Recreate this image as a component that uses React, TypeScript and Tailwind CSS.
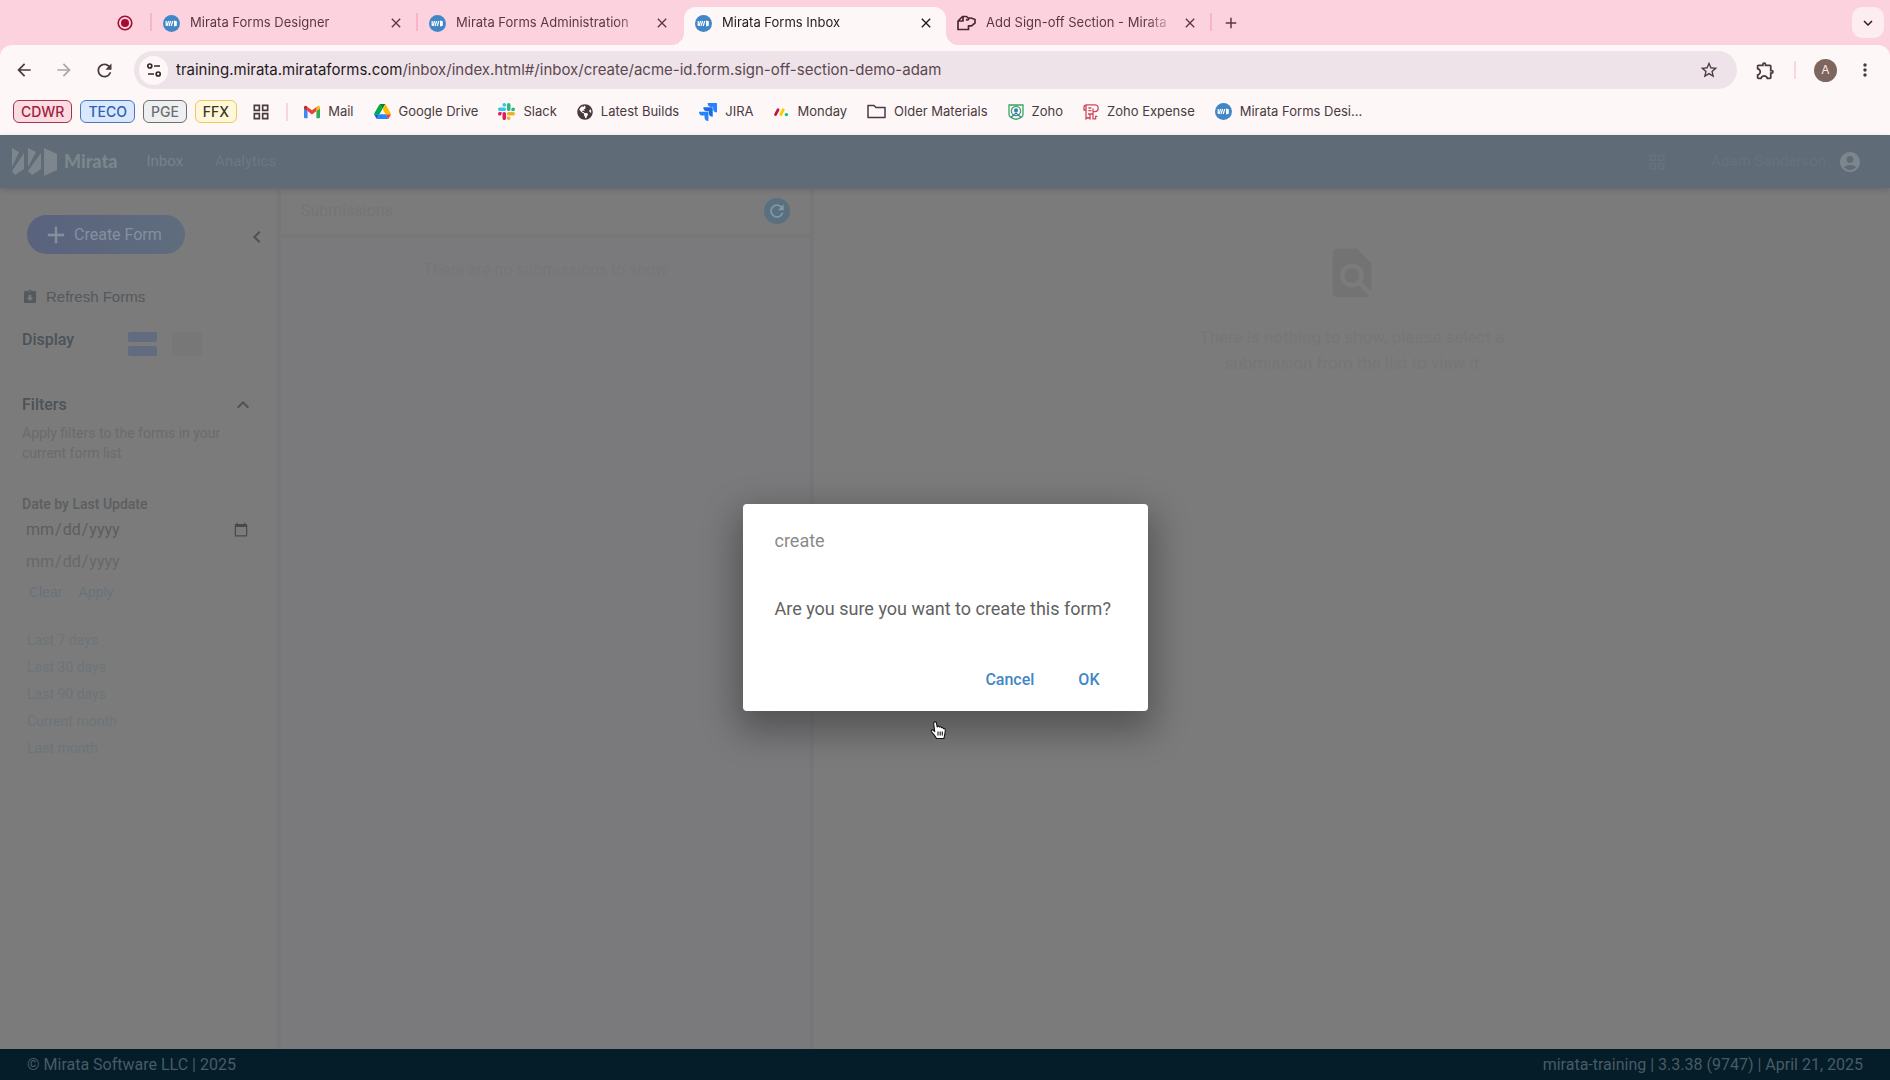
import type { ReactNode } from 'react';
import { FaGlobeAmericas } from 'react-icons/fa';
import {
  MdAccountCircle,
  MdAdd,
  MdArrowBack,
  MdArrowForward,
  MdAssignmentReturned,
  MdChevronLeft,
  MdClose,
  MdExpandLess,
  MdExpandMore,
  MdFindInPage,
  MdMoreVert,
  MdOutlineExtension,
  MdOutlineGridView,
  MdRefresh,
  MdStarOutline,
} from 'react-icons/md';

/* ---------- Icons ---------- */

function MirataIcon() {
  return (
    <svg viewBox="0 0 17 17" className="size-[17px] shrink-0">
      <circle cx="8.5" cy="8.5" r="8.5" fill="#4187c7" />
      <path d="M3.2 6 3.2 10.8M5.6 6 4 11M7.6 6 6 11M9.800 6 8.200 11" fill="none" stroke="#fff" strokeWidth="1.2" />
      <path d="M11 5.400 13.800 6.300V10.700L11 11.600Z" fill="#fff" />
    </svg>
  );
}

function RecordIcon() {
  return (
    <svg viewBox="0 0 16 16" className="size-4">
      <circle cx="8" cy="8" r="6.8" fill="none" stroke="#a30d31" strokeWidth="1.6" />
      <circle cx="8" cy="8" r="4" fill="#a30d31" />
    </svg>
  );
}

function ScribeIcon() {
  return (
    <svg viewBox="0 0 19 16" className="h-4 w-[19px] shrink-0" fill="none" stroke="#4a2832" strokeWidth="1.7" strokeLinejoin="round">
      <path d="M1 14.500V6L5.500 1.500H9.500L11 3H14L18 4.500V8L14.500 10.800H11.500V14.500ZM1.500 6H6V1.800M9 4.500C10.500 5.500 11.500 5 12 3.500" />
    </svg>
  );
}

function SiteSettingsIcon() {
  return (
    <svg viewBox="0 0 16 16" className="size-4" fill="none" stroke="#33262b" strokeWidth="1.7">
      <circle cx="3.8" cy="4" r="2" />
      <path d="M8 4h6M2 12h6" />
      <circle cx="12.2" cy="12" r="2" />
    </svg>
  );
}

function GmailIcon() {
  return (
    <svg viewBox="0 0 18 14" className="h-3.5 w-4">
      <path d="M0 2.5V13a1 1 0 0 0 1 1h3V6Z" fill="#4285f4" />
      <path d="M18 2.5V13a1 1 0 0 1-1 1h-3V6Z" fill="#34a853" />
      <path d="M14 1.3V6l4-3V2c0-1.8-1.8-2.4-3-1.5Z" fill="#fbbc04" />
      <path d="M4 6V1.3l5 3.8 5-3.8V6L9 9.8Z" fill="#ea4335" />
      <path d="M0 2v1l4 3V1.3L3 .5C1.8-.4 0 .2 0 2Z" fill="#c5221f" />
    </svg>
  );
}

function DriveIcon() {
  return (
    <svg viewBox="0 0 87 78" className="h-[15px] w-[17px]">
      <path d="m6.6 66.85 3.85 6.65c.8 1.4 1.95 2.5 3.3 3.3L27.5 53H0c0 1.55.4 3.1 1.2 4.5z" fill="#0066da" />
      <path d="M43.65 25 29.9 1.2c-1.35.8-2.5 1.9-3.3 3.3L1.2 48.5A9.06 9.06 0 0 0 0 53h27.5z" fill="#00ac47" />
      <path d="M73.55 76.8c1.35-.8 2.5-1.9 3.3-3.3l1.6-2.75L86.1 57.5c.8-1.4 1.2-2.95 1.2-4.5H59.8l5.85 11.5z" fill="#ea4335" />
      <path d="M43.65 25 57.4 1.2C56.05.4 54.5 0 52.9 0H34.4c-1.6 0-3.15.45-4.5 1.2z" fill="#00832d" />
      <path d="M59.8 53H27.5L13.75 76.8c1.35.8 2.9 1.2 4.5 1.2h50.8c1.6 0 3.15-.45 4.5-1.2z" fill="#2684fc" />
      <path d="m73.4 26.5-12.7-22c-.8-1.4-1.95-2.5-3.3-3.3L43.65 25 59.8 53h27.45c0-1.55-.4-3.1-1.2-4.5z" fill="#ffba00" />
    </svg>
  );
}

function SlackIcon() {
  return (
    <svg viewBox="0 0 122.8 122.8" className="size-[17px]">
      <path d="M25.8 77.6c0 7.1-5.8 12.9-12.9 12.9S0 84.7 0 77.6s5.8-12.9 12.9-12.9h12.9v12.9zm6.5 0c0-7.1 5.8-12.9 12.9-12.9s12.9 5.8 12.9 12.9v32.3c0 7.1-5.8 12.9-12.9 12.9s-12.9-5.8-12.9-12.9V77.6z" fill="#e01e5a" />
      <path d="M45.2 25.8c-7.1 0-12.9-5.8-12.9-12.9S38.1 0 45.2 0s12.9 5.8 12.9 12.9v12.9H45.2zm0 6.5c7.1 0 12.9 5.8 12.9 12.9s-5.8 12.9-12.9 12.9H12.9C5.8 58.1 0 52.3 0 45.2s5.8-12.9 12.9-12.9h32.3z" fill="#36c5f0" />
      <path d="M97 45.2c0-7.1 5.8-12.9 12.9-12.9s12.9 5.8 12.9 12.9-5.8 12.9-12.9 12.9H97V45.2zm-6.5 0c0 7.1-5.8 12.9-12.9 12.9s-12.9-5.8-12.9-12.9V12.9C64.7 5.8 70.5 0 77.6 0s12.9 5.8 12.9 12.9v32.3z" fill="#2eb67d" />
      <path d="M77.6 97c7.1 0 12.9 5.8 12.9 12.9s-5.8 12.9-12.9 12.9-12.9-5.8-12.9-12.9V97h12.9zm0-6.5c-7.1 0-12.9-5.8-12.9-12.9s5.8-12.9 12.9-12.9h32.3c7.1 0 12.9 5.8 12.9 12.9s-5.8 12.9-12.9 12.9H77.6z" fill="#ecb22e" />
    </svg>
  );
}

function JiraIcon() {
  return (
    <svg viewBox="0 0 24 24" className="size-[18px]">
      <path d="M11.57 11.51H0a5.22 5.22 0 0 0 5.23 5.22h2.13v2.05A5.22 5.22 0 0 0 12.58 24V12.52a1 1 0 0 0-1.01-1.01z" fill="#2684ff" />
      <path d="M17.29 5.76H5.74a5.22 5.22 0 0 0 5.21 5.21h2.13v2.06a5.22 5.22 0 0 0 5.22 5.21V6.76a1 1 0 0 0-1.01-1z" fill="#1a6ce8" />
      <path d="M23.01 0H11.46a5.22 5.22 0 0 0 5.21 5.21h2.13v2.06A5.22 5.22 0 0 0 24 12.48V1.01A1 1 0 0 0 23.01 0z" fill="#2684ff" />
    </svg>
  );
}

function MondayIcon() {
  return (
    <svg viewBox="0 0 16 12" className="h-3 w-4" strokeLinecap="round" strokeWidth="2.8">
      <path d="M2.500 8.6 5 3.800" stroke="#c4124a" />
      <path d="M7.8 8.6 10.2 3.800" stroke="#ffcb00" />
      <circle cx="13.4" cy="8.6" r="1.7" fill="#00ca72" />
    </svg>
  );
}

function FolderIcon() {
  return (
    <svg viewBox="0 0 19 15" className="h-[15px] w-[19px]" fill="none" stroke="currentColor" strokeWidth="1.5" strokeLinejoin="round">
      <path d="M1 13.500V1.500h6l2 2h9v10Z" />
    </svg>
  );
}

function ZohoIcon() {
  return (
    <svg viewBox="0 0 16 16" className="size-4" fill="none" strokeWidth="1.3">
      <path d="M1 1h14v9.500c0 2-3 3.800-7 4.800C4 14.300 1 12.500 1 10.500Z" stroke="#3aa564" />
      <circle cx="8" cy="7" r="4.6" stroke="#3aa564" />
      <circle cx="8" cy="6.4" r="1.4" fill="#3d7fb8" stroke="#3d7fb8" />
      <path d="M3 13.200 8 9l5 4.200" stroke="#3d7fb8" />
    </svg>
  );
}

function ZohoExpenseIcon() {
  return (
    <svg viewBox="0 0 16 16" className="size-4" fill="none" stroke="#d2475c" strokeWidth="1.3">
      <path d="M3 10V2.4C3 1.4 3.8.8 4.6.8h7.2a3.4 3.4 0 0 1 0 6.8H10V4.4M3 6H1V3.2C1 1.6 2 .8 4 .8M5.4 4h3M5.4 6.6h3M3 10v4.8l2-1.2 2 1.2V10M10 7.6v7.2h2.6v-2.4h1.8M5 10h5" />
    </svg>
  );
}

function MirataLogo() {
  return (
    <svg viewBox="0 0 46 29" className="h-[29px] w-[46px]" fill="#7d868d">
      <path d="M0 1 7 5 0 20ZM12 6v16L3 28 0 24ZM16 1 24 5 16 20ZM29 6v16l-9 6-4-4ZM32 1l13 6v16l-13 6Z" />
    </svg>
  );
}

/* ---------- Browser chrome ---------- */

interface TabProps {
  icon: ReactNode;
  title: string;
  active?: boolean;
  divider?: boolean;
}

function Tab({ icon, title, active, divider }: TabProps) {
  return (
    <div className={active ? 'relative flex h-[38px] w-[262px] items-center rounded-t-xl bg-[#fdf7f7] pb-1.5 pl-[11px] pr-3 text-[#1f1a1c]' : 'relative flex h-[38px] w-[266px] items-center pb-1.5 pl-[11px] pr-3.5 text-[#5a3843]'}>
      {active && (
        <>
          <span className="absolute -left-3 bottom-0 size-3 bg-[radial-gradient(circle_at_0_0,transparent_12px,#fdf7f7_12px)]" />
          <span className="absolute -right-3 bottom-0 size-3 bg-[radial-gradient(circle_at_100%_0,transparent_12px,#fdf7f7_12px)]" />
        </>
      )}
      {icon}
      <span className="ml-2.5 flex-1 overflow-hidden whitespace-nowrap text-[13px] [mask-image:linear-gradient(to_right,#000_160px,transparent_190px)]">{title}</span>
      <button type="button" aria-label={`Close ${title}`} className="ml-1 shrink-0">
        <MdClose className="size-4" />
      </button>
      {divider && <span className="absolute right-0 top-1.5 h-[18px] w-0.5 bg-[#f8b4c8]" />}
    </div>
  );
}

function TabStrip() {
  return (
    <div className="flex h-[45px] items-start bg-[#fdd2df] pt-[7px]">
      <div className="relative flex h-8 w-[152px] items-center justify-end pr-[19px]">
        <RecordIcon />
        <span className="absolute right-0 top-1.5 h-[18px] w-0.5 bg-[#f8b4c8]" />
      </div>
      <Tab icon={<MirataIcon />} title="Mirata Forms Designer" divider />
      <Tab icon={<MirataIcon />} title="Mirata Forms Administration" />
      <Tab icon={<MirataIcon />} title="Mirata Forms Inbox" active />
      <Tab icon={<ScribeIcon />} title="Add Sign-off Section - Mirata" divider />
      <button type="button" aria-label="New tab" className="ml-2.5 flex h-8 items-center text-[#5a3843]">
        <MdAdd className="size-[18px]" />
      </button>
      <button type="button" aria-label="Search tabs" className="ml-auto mr-1.5 flex h-[31px] w-8 items-center justify-center rounded-[10px] bg-[#fdecf0] text-[#2b1d22]">
        <MdExpandMore className="size-[18px]" />
      </button>
    </div>
  );
}

function Toolbar() {
  return (
    <div className="bg-[#fdd2df]">
      <div className="flex h-[49px] items-center rounded-t-xl bg-[#fdf7f7] pl-3.5 pr-[15px] pt-px text-[#4a3a40]">
        <button type="button" aria-label="Back"><MdArrowBack className="size-5" /></button>
        <button type="button" aria-label="Forward" className="ml-5 text-[#b3a4a9]"><MdArrowForward className="size-5" /></button>
        <button type="button" aria-label="Reload" className="ml-5"><MdRefresh className="size-[21px]" /></button>
        <div className="ml-[19px] flex h-[38px] flex-1 items-center rounded-full bg-[#eee3e9] pl-[5px] pr-[18px]">
          <button type="button" aria-label="Site information" className="flex size-[29px] items-center justify-center rounded-full bg-[#fdf7f7]">
            <SiteSettingsIcon />
          </button>
          <span className="ml-2 flex-1 whitespace-nowrap text-[15px] text-[#5b484f]">
            <span className="text-[#1f1a1c]">training.mirata.mirataforms.com</span>
            /inbox/index.html#/inbox/create/acme-id.form.sign-off-section-demo-adam
          </span>
          <button type="button" aria-label="Bookmark this page"><MdStarOutline className="size-5" /></button>
        </div>
        <button type="button" aria-label="Extensions" className="ml-[18px]"><MdOutlineExtension className="size-[21px]" /></button>
        <span className="ml-[18px] h-[18px] w-0.5 bg-[#fbd5df]" />
        <button type="button" className="ml-[18px] size-[23px] rounded-full bg-[#7d665f] text-[12px] text-[#fbe9e4]">A</button>
        <button type="button" aria-label="Menu" className="ml-[18px]"><MdMoreVert className="size-5" /></button>
      </div>
    </div>
  );
}

const bookmarks: { name: string; icon: ReactNode }[] = [
  { name: 'Mail', icon: <GmailIcon /> },
  { name: 'Google Drive', icon: <DriveIcon /> },
  { name: 'Slack', icon: <SlackIcon /> },
  { name: 'Latest Builds', icon: <FaGlobeAmericas className="size-4" /> },
  { name: 'JIRA', icon: <JiraIcon /> },
  { name: 'Monday', icon: <MondayIcon /> },
  { name: 'Older Materials', icon: <FolderIcon /> },
  { name: 'Zoho', icon: <ZohoIcon /> },
  { name: 'Zoho Expense', icon: <ZohoExpenseIcon /> },
  { name: 'Mirata Forms Desi...', icon: <MirataIcon /> },
];

const groups = [
  { name: 'CDWR', style: 'border-[#a8324c] bg-[#fbdce2] text-[#a3203f]' },
  { name: 'TECO', style: 'border-[#4a78b8] bg-[#d9e8fd] text-[#2f5fb3]' },
  { name: 'PGE', style: 'border-[#6b6f72] bg-[#eeeff0] text-[#6b6f72]' },
  { name: 'FFX', style: 'border-[#f0c95c] bg-[#fff8d8] text-[#3d3528]' },
];

function BookmarksBar() {
  return (
    <nav className="flex h-[41px] items-center bg-[#fdf7f7] pb-1.5 pl-[13px] text-[13px] text-[#4a3a40]">
      <div className="flex gap-2">
        {groups.map((group) => (
          <button key={group.name} type="button" className={`h-[23px] rounded-md border px-[7px] text-[14px] leading-5 font-medium ${group.style}`}>
            {group.name}
          </button>
        ))}
      </div>
      <MdOutlineGridView className="ml-3.5 size-5" />
      <span className="ml-[15px] h-[18px] w-0.5 bg-[#fbd5df]" />
      <div className="ml-4 flex gap-5">
        {bookmarks.map((bookmark) => (
          <a key={bookmark.name} href="#" className="flex items-center gap-2 whitespace-nowrap">
            {bookmark.icon}
            {bookmark.name}
          </a>
        ))}
      </div>
    </nav>
  );
}

/* ---------- App ---------- */

function AppHeader() {
  return (
    <header className="relative flex h-[53px] shrink-0 items-center bg-[#5f6b77] pl-3 pr-7 text-[#77828b] shadow-[0_2px_6px_rgba(0,0,0,0.15)]">
      <MirataLogo />
      <span className="ml-1.5 font-[Lato] text-[18px] font-black text-[#7d868d]">Mirata</span>
      <nav className="ml-[29px] flex gap-8 text-[15px]">
        <a href="#">Inbox</a>
        <a href="#" className="text-[#6d7882]">Analytics</a>
      </nav>
      <div className="ml-auto flex items-center text-[15px] text-[#67727b]">
        <MdOutlineGridView className="size-5" />
        <span className="ml-11 mr-3">Adam Sanderson</span>
        <MdAccountCircle className="size-6 text-[#7c868c]" />
      </div>
    </header>
  );
}

const ranges = ['Last 7 days', 'Last 30 days', 'Last 90 days', 'Current month', 'Last month'];

function Sidebar() {
  return (
    <aside className="w-[277px] shrink-0 bg-[#7b7b7b] pl-[22px] pr-5 pt-[27px] text-[#4c5258]">
      <div className="flex items-center justify-between">
        <button type="button" className="ml-[5px] flex h-[39px] w-[158px] items-center rounded-full bg-linear-to-r from-[#5a627e] to-[#5f6d7e] pl-[15px] text-[16px] text-[#85909f]">
          <MdAdd className="size-7" />
          <span className="ml-1">Create Form</span>
        </button>
        <button type="button" aria-label="Collapse sidebar" className="-mr-3 mt-1"><MdChevronLeft className="size-6" /></button>
      </div>
      <button type="button" className="mt-[33px] flex items-center gap-2 font-['Liberation_Sans'] text-[15px] leading-5 text-[#54595d]">
        <MdAssignmentReturned className="size-4" />
        Refresh Forms
      </button>
      <div className="mt-[19px] flex h-7 items-center">
        <span className="w-[106px] text-[16px] font-medium">Display</span>
        <button type="button" aria-label="List view" className="mt-2 flex w-[29px] flex-col gap-1">
          <span className="h-2.5 w-full rounded-xs bg-[#626c80]" />
          <span className="h-2.5 w-full rounded-xs bg-[#626c80]" />
        </button>
        <button type="button" aria-label="Grid view" className="ml-[15px] mt-2 h-6 w-[30px] rounded-xs bg-[#777777]" />
      </div>
      <div className="mt-[39px] flex items-center justify-between">
        <h2 className="text-[16px] font-medium">Filters</h2>
        <MdExpandLess className="mr-0.5 size-6" />
      </div>
      <p className="mt-1.5 text-[14px] leading-5 text-[#686c6e]">Apply filters to the forms in your current form list</p>
      <label htmlFor="from" className="mt-[31px] block text-[14px] leading-5 font-medium text-[#5c5f61]">Date by Last Update</label>
      <input id="from" type="date" className="ml-[3px] block h-8 w-[226px] bg-transparent text-[16px] text-[#5c5e60] [&::-webkit-calendar-picker-indicator]:opacity-40" />
      <input aria-label="To" type="date" className="ml-[3px] block h-8 w-[226px] bg-transparent text-[16px] text-[#66686a] [&::-webkit-calendar-picker-indicator]:opacity-0" />
      <div className="ml-[7px] mt-1 flex gap-4 font-['Liberation_Sans'] text-[14px] leading-5 text-[#69727a]">
        <button type="button">Clear</button>
        <button type="button">Apply</button>
      </div>
      <ul className="ml-[5px] mt-[25px] text-[14px] leading-[27px] text-[#6d7479]">
        {ranges.map((range) => (
          <li key={range}><a href="#">{range}</a></li>
        ))}
      </ul>
    </aside>
  );
}

function FormList() {
  return (
    <section className="flex w-[537px] shrink-0 flex-col border-x-4 border-[#777779] bg-[#7a7a7c]">
      <div className="flex h-[50px] items-center justify-between border-b-4 border-[#777778] bg-[#7b7b7b] pl-5 pr-5 text-[#757575]">
        <span className="text-[16px]">Submissions</span>
        <button type="button" aria-label="Refresh list" className="flex size-[26px] items-center justify-center rounded-full bg-[#58707f] text-[#8498a5]">
          <MdRefresh className="size-5" />
        </button>
      </div>
      <p className="mt-5 text-center text-[16px] text-[#767678]">There are no submissions to show</p>
    </section>
  );
}

function Preview() {
  return (
    <section className="flex flex-1 flex-col items-center bg-[#7b7b7b] pt-14">
      <MdFindInPage className="size-[58px] text-[#737373]" />
      <p className="mt-[22px] w-80 text-center text-[17px] leading-[26px] text-[#767676]">
        There is nothing to show, please select a submission from the list to view it
      </p>
    </section>
  );
}

function HandCursor() {
  return (
    <svg viewBox="0 0 18 20" className="absolute -bottom-[29px] left-[186px] h-5 w-[18px]" fill="#fff" stroke="#111" strokeWidth="1.1" strokeLinejoin="round">
      <path d="M5.2 2.2c.8-.8 2-.3 2.2.8l.8 4 .2-.6c.8-.6 1.8-.2 2 .6.8-.6 1.8-.2 2.1.7.9-.4 1.8 0 2 .9 1-.2 1.8.3 1.8 1.4 0 3.6-.9 4.3-1.3 8.5H7.5C6.5 16 4 14 2.4 11.5 1.8 10.4 3 9.4 4.2 10.2L5.7 11.600 4.7 4C4.6 3.3 4.7 2.6 5.2 2.2Z" />
      <path d="M9 11.5v4M11.2 11.5v4M13.3 11.5v4" fill="none" />
    </svg>
  );
}

function ConfirmDialog() {
  return (
    <div className="absolute inset-0 flex items-center justify-center">
      <div role="dialog" aria-labelledby="dialog-title" className="relative flex w-[405px] flex-col rounded bg-white px-8 pb-[11px] pt-[25px] shadow-[0_14px_36px_6px_rgba(0,0,0,0.32)]">
        <h1 id="dialog-title" className="text-[18px] leading-6 text-[#8a8a8a]">create</h1>
        <p className="mt-11 whitespace-nowrap text-[18px] leading-6 text-[#626262]">Are you sure you want to create this form?</p>
        <div className="mt-[39px] flex h-10 items-center justify-end gap-11 pr-4 text-[16px] font-medium text-[#4187c7]">
          <button type="button">Cancel</button>
          <button type="button">OK</button>
        </div>
        <HandCursor />
      </div>
    </div>
  );
}

export default function App() {
  return (
    <div className="flex h-screen flex-col overflow-hidden font-[Inter,sans-serif]">
      <TabStrip />
      <Toolbar />
      <BookmarksBar />
      <div className="relative flex min-h-0 flex-1 flex-col font-[Roboto,sans-serif]">
        <AppHeader />
        <main className="flex min-h-0 flex-1">
          <Sidebar />
          <FormList />
          <Preview />
        </main>
        <footer className="flex h-[31px] shrink-0 items-center justify-between bg-[#051d29] px-[27px] text-[16px] text-[#485b66]">
          <span>© Mirata Software LLC | 2025</span>
          <span>mirata-training | 3.3.38 (9747) | April 21, 2025</span>
        </footer>
        <ConfirmDialog />
      </div>
    </div>
  );
}
